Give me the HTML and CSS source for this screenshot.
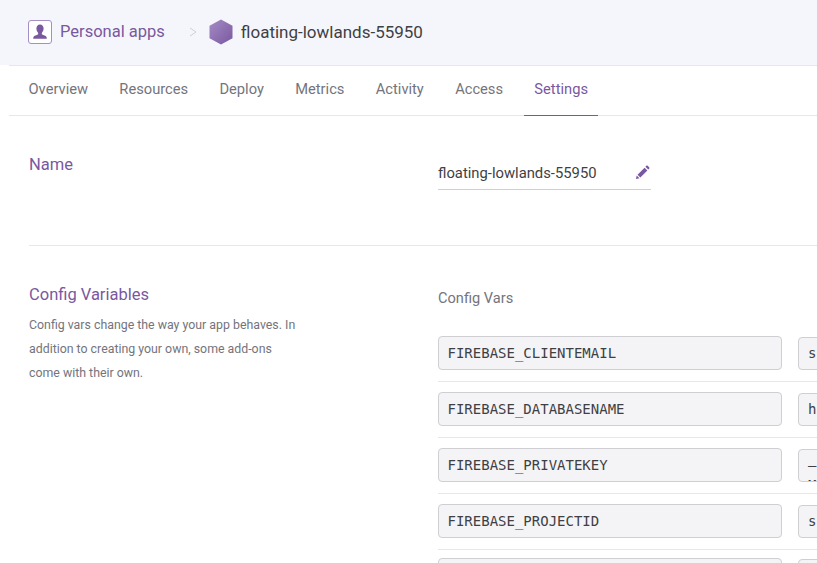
FILE: index.html
```html
<!DOCTYPE html>
<html lang="en">
<head>
<meta charset="UTF-8" />
<title>floating-lowlands-55950 · Settings</title>
<link rel="stylesheet" href="styles.css">
</head>
<body>
  <header class="app-header">
    <span class="owner-badge">
      <svg viewBox="0 0 24 24" width="24" height="24" aria-hidden="true">
        <path d="M12 4.5c-2.2 0-3.6 1.7-3.6 4 0 1.700.7 3.200 1.600 4.200.3.400.3 1.400-.2 1.800-1 .7-3.800 1.100-4.300 2.500-.2.600-.3 1.300-.3 1.800h13.600c0-.5-.1-1.200-.3-1.800-.5-1.400-3.300-1.800-4.300-2.500-.5-.4-.5-1.400-.2-1.800.9-1 1.600-2.500 1.600-4.200 0-2.300-1.400-4-3.600-4z"/>
      </svg>
    </span>
    <a class="owner-link" href="#">Personal apps</a>
    <svg class="crumb-sep" viewBox="0 0 8 10" width="8" height="10" aria-hidden="true">
      <path d="M1 1l6 4-6 4" />
    </svg>
    <svg class="app-hex" viewBox="0 0 24 26" width="24" height="26" aria-hidden="true">
      <defs>
        <linearGradient id="hexFill" x1="0" y1="0" x2="1" y2="1">
          <stop offset="0" stop-color="#a58bc6" />
          <stop offset="1" stop-color="#79589f" />
        </linearGradient>
      </defs>
      <path fill="url(#hexFill)" d="M12 .5l11.500 6.200v12.600L12 25.500.5 19.300V6.700z" />
    </svg>
    <span class="app-name">floating-lowlands-55950</span>
  </header>

  <nav class="tabs">
    <a href="#">Overview</a>
    <a href="#">Resources</a>
    <a href="#">Deploy</a>
    <a href="#">Metrics</a>
    <a href="#">Activity</a>
    <a href="#">Access</a>
    <a class="active" href="#">Settings</a>
  </nav>

  <main class="content">
    <section class="setting setting-name">
      <div class="setting-info">
        <h2>Name</h2>
      </div>
      <div class="setting-body">
        <div class="name-field">
          <span>floating-lowlands-55950</span>
          <svg viewBox="0 0 16 16" width="15" height="15" aria-hidden="true">
            <path d="M1 15l.8-3.800 3 3zM2.700 10.300l7.500-7.500 3 3-7.500 7.500zM11.100 1.900l1-1c.4-.4 1-.4 1.400 0l1.600 1.600c.4.4.4 1 0 1.400l-1 1z"/>
          </svg>
        </div>
      </div>
    </section>

    <section class="setting">
      <div class="setting-info">
        <h2>Config Variables</h2>
        <p>Config vars change the way your app behaves. In addition to creating your own, some add-ons come with their own.</p>
      </div>
      <div class="setting-body">
        <h3>Config Vars</h3>
        <div class="var-row">
          <div class="var-key">FIREBASE_CLIENTEMAIL</div>
          <div class="var-value">service-account</div>
        </div>
        <div class="var-row">
          <div class="var-key">FIREBASE_DATABASENAME</div>
          <div class="var-value">https://</div>
        </div>
        <div class="var-row">
          <div class="var-key">FIREBASE_PRIVATEKEY</div>
          <div class="var-value">—<br>MI</div>
        </div>
        <div class="var-row">
          <div class="var-key">FIREBASE_PROJECTID</div>
          <div class="var-value">service</div>
        </div>
        <div class="var-row var-row-last">
          <div class="var-key"></div>
          <div class="var-value"></div>
        </div>
      </div>
    </section>
  </main>
</body>
</html>
```

FILE: styles.css
```css
* {
  box-sizing: border-box;
}
html, body {
  height: 100%;
}
body {
  margin: 0;
  overflow: hidden;
  background: #fff;
  font-family: Roboto, 'Open Sans', sans-serif;
  color: #3f3f44;
}
a {
  text-decoration: none;
}

/* Top bar */
.app-header {
  display: flex;
  align-items: center;
  height: 65px;
  padding: 0 0 2px 28px;
  background: #f5f6fb;
}
.owner-badge {
  display: flex;
  align-items: center;
  justify-content: center;
  width: 24px;
  height: 24px;
  background: #fff;
  border: 1px solid #a68fc6;
  border-radius: 3px;
}
.owner-badge svg {
  flex: none;
  fill: #79589f;
}
.owner-link {
  margin-left: 8px;
  font-size: 16.500px;
  color: #79589f;
}
.crumb-sep {
  margin-left: 24px;
  fill: none;
  stroke: #cfd0d6;
  stroke-width: 1;
}
.app-hex {
  margin-left: 12px;
}
.app-name {
  margin-left: 8px;
  font-size: 17px;
  color: #3f3f44;
}

/* Tabs */
.tabs {
  display: flex;
  height: 51px;
  margin-left: 9px;
  padding-left: 9px;
  border-top: 1px solid #e7e7ea;
  border-bottom: 1px solid #e7e7ea;
}
.tabs a {
  display: flex;
  align-items: center;
  height: 50px;
  padding: 0 10.500px 4px;
  margin-right: 10.300px;
  font-size: 14.700px;
  color: #74747c;
}
.tabs a.active {
  color: #79589f;
  border-bottom: 1px solid #79589f;
}

/* Settings sections */
.content {
  padding-left: 29px;
}
.setting {
  display: flex;
}
.setting-name {
  height: 130px;
  border-bottom: 1px solid #e7e7ea;
}
.setting-info {
  width: 409px;
  flex: none;
  padding-top: 39px;
}
.setting-info h2 {
  margin: 0;
  font-size: 16.500px;
  line-height: 20px;
  font-weight: 400;
  color: #79589f;
}
.setting-info p {
  width: 275px;
  margin: 8px 0 0;
  font-size: 12.350px;
  line-height: 24px;
  color: #74747c;
}
.setting-body {
  flex: 1;
  min-width: 0;
}
.name-field {
  display: flex;
  align-items: center;
  justify-content: space-between;
  width: 213px;
  height: 36px;
  margin-top: 38px;
  padding-top: 2px;
  padding-right: 1px;
  border-bottom: 1px solid #cfcfd3;
  font-size: 14.800px;
}
.name-field svg {
  fill: #79589f;
}
.setting-body h3 {
  margin: 43px 0 0;
  font-size: 14.600px;
  line-height: 19px;
  font-weight: 400;
  color: #74747c;
}

/* Config var rows */
.var-row {
  display: flex;
  gap: 16px;
  height: 56px;
  padding-top: 10px;
  border-bottom: 1px solid #e7e7ea;
}
.setting-body h3 + .var-row {
  margin-top: 18px;
}
.var-row-last {
  padding-top: 8px;
  border-bottom: 0;
}
.var-key,
.var-value {
  height: 34px;
  padding: 0 9px;
  background: #f4f4f6;
  border: 1px solid #cfcfd3;
  border-radius: 4px;
  font-family: 'DejaVu Sans Mono', monospace;
  font-size: 14px;
  line-height: 32px;
  color: #3f3f44;
  overflow: hidden;
  white-space: nowrap;
}
.var-key {
  width: 344px;
  flex: none;
  padding-left: 8.500px;
}
.var-value {
  width: 344px;
  flex: none;
  height: 33px;
  margin-top: 1px;
  line-height: 20px;
  padding-top: 5px;
}
```
